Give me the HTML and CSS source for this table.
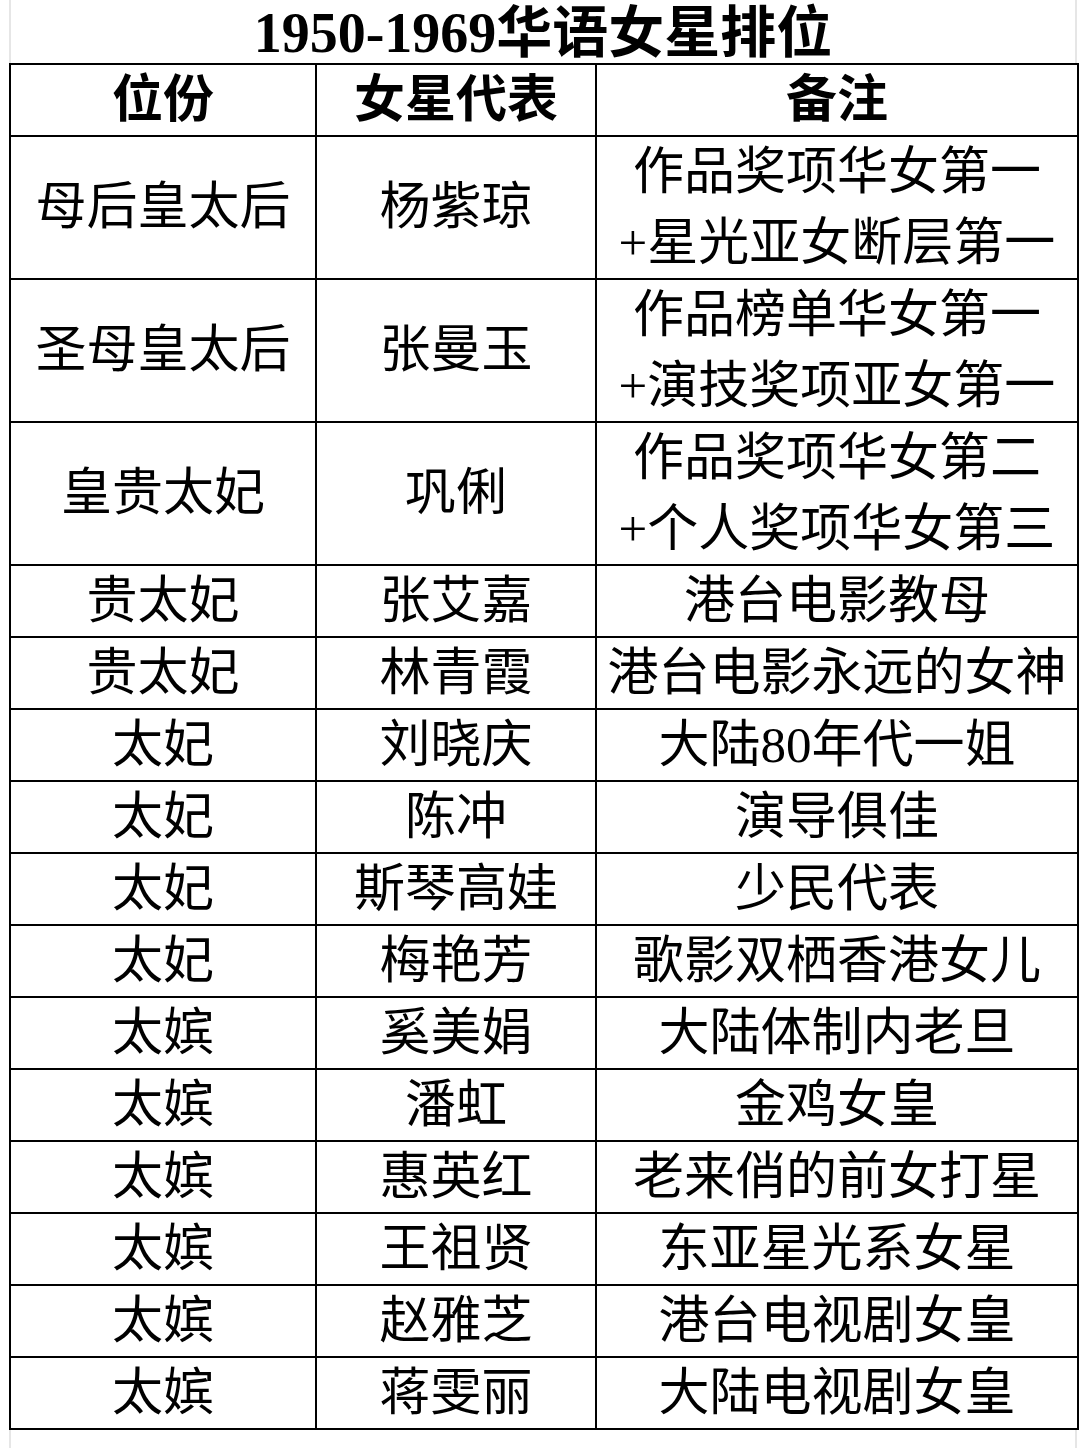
FILE: index.html
```html
<!DOCTYPE html>
<html lang="zh-CN">
<head>
<meta charset="utf-8">
<link rel="stylesheet" href="styles.css">
</head>
<body>
<div class="sheet">
  <div class="title">1950-1969华语女星排位</div>
  <table class="grid">
    <colgroup>
      <col class="c1"><col class="c2"><col class="c3">
    </colgroup>
    <thead>
      <tr class="head"><th>位份</th><th>女星代表</th><th>备注</th></tr>
    </thead>
    <tbody>
      <tr class="dbl"><td>母后皇太后</td><td>杨紫琼</td><td>作品奖项华女第一<br>+星光亚女断层第一</td></tr>
      <tr class="dbl"><td>圣母皇太后</td><td>张曼玉</td><td>作品榜单华女第一<br>+演技奖项亚女第一</td></tr>
      <tr class="dbl"><td>皇贵太妃</td><td>巩俐</td><td>作品奖项华女第二<br>+个人奖项华女第三</td></tr>
      <tr><td>贵太妃</td><td>张艾嘉</td><td>港台电影教母</td></tr>
      <tr><td>贵太妃</td><td>林青霞</td><td>港台电影永远的女神</td></tr>
      <tr><td>太妃</td><td>刘晓庆</td><td>大陆80年代一姐</td></tr>
      <tr><td>太妃</td><td>陈冲</td><td>演导俱佳</td></tr>
      <tr><td>太妃</td><td>斯琴高娃</td><td>少民代表</td></tr>
      <tr><td>太妃</td><td>梅艳芳</td><td>歌影双栖香港女儿</td></tr>
      <tr><td>太嫔</td><td>奚美娟</td><td>大陆体制内老旦</td></tr>
      <tr><td>太嫔</td><td>潘虹</td><td>金鸡女皇</td></tr>
      <tr><td>太嫔</td><td>惠英红</td><td>老来俏的前女打星</td></tr>
      <tr><td>太嫔</td><td>王祖贤</td><td>东亚星光系女星</td></tr>
      <tr><td>太嫔</td><td>赵雅芝</td><td>港台电视剧女皇</td></tr>
      <tr><td>太嫔</td><td>蒋雯丽</td><td>大陆电视剧女皇</td></tr>
    </tbody>
  </table>
</div>
</body>
</html>
```
FILE: styles.css
```css
html, body {
  margin: 0;
  padding: 0;
  background: #fff;
}
.sheet {
  width: 1086px;
  height: 1448px;
  background:
    linear-gradient(to right, transparent 9px, #e6e6e6 9px, #e6e6e6 11px, transparent 11px, transparent 1075px, #e6e6e6 1075px, #e6e6e6 1077px, transparent 1077px);
  font-family: "Liberation Serif", "Noto Sans CJK SC", serif;
  color: #000;
}
.title {
  height: 63px;
  line-height: 66px;
  text-align: center;
  font-size: 56px;
  font-weight: bold;
  width: 1086px;
}
.grid {
  margin-left: 9px;
  width: 1068px;
  border-collapse: collapse;
  table-layout: fixed;
  background: #fff;
}
.c1 { width: 306px; }
.c2 { width: 280px; }
.c3 { width: 482px; }
.grid th,
.grid td {
  border: 2.5px solid #000;
  padding: 0;
  text-align: center;
  vertical-align: middle;
  font-size: 51px;
  line-height: 70px;
  height: 70px;
  white-space: nowrap;
  overflow: hidden;
}
.grid th {
  font-weight: bold;
}
.grid td {
  font-weight: normal;
}
.grid tr.dbl td {
  line-height: 70.5px;
  height: 141px;
}
```
